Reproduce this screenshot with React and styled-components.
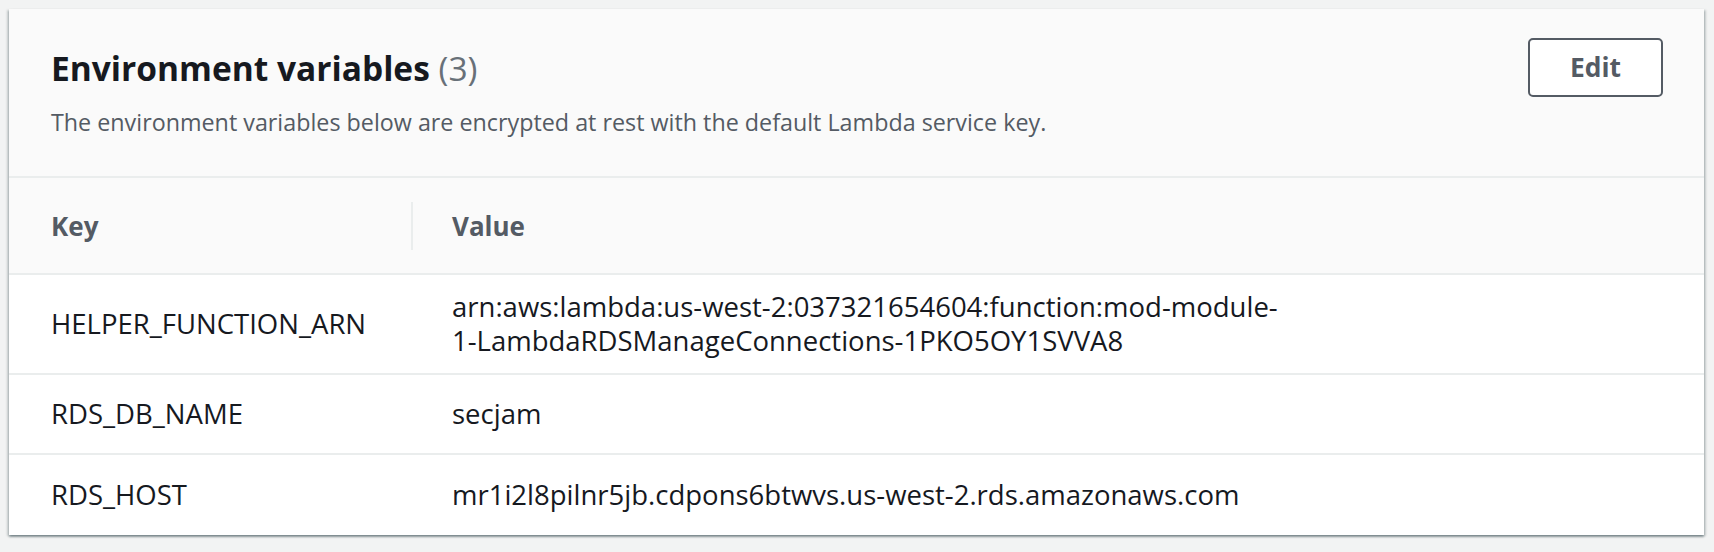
import React from "react";
import styled, { createGlobalStyle } from "styled-components";

const GlobalStyle = createGlobalStyle`
  html, body {
    margin: 0;
    padding: 0;
    background: #f2f3f3;
  }
  body {
    font-family: "Open Sans", "Noto Sans", sans-serif;
    color: #16191f;
    -webkit-font-smoothing: antialiased;
  }
`;

const Page = styled.div`
  padding: 9px 10px 9px 9px;
`;

const Card = styled.section`
  background: #ffffff;
  box-shadow: 0 2px 2px 0 rgba(0, 28, 36, 0.35),
    2px 1px 2px 0 rgba(0, 28, 36, 0.16),
    -2px 1px 2px 0 rgba(0, 28, 36, 0.16);
`;

const Header = styled.header`
  display: flex;
  align-items: flex-start;
  justify-content: space-between;
  padding: 29px 41px 36px 42px;
  background: #fafafa;
  border-bottom: 2px solid #eaeded;
`;

const HeaderText = styled.div`
  margin-top: 10px;
`;

const Title = styled.h2`
  margin: 0;
  font-size: 33.5px;
  line-height: 40px;
  font-weight: 700;
  color: #16191f;
`;

const Counter = styled.span`
  font-weight: 400;
  color: #687078;
`;

const Description = styled.p`
  margin: 16px 0 0;
  font-size: 23.3px;
  line-height: 36px;
  color: #545b64;
`;

const Button = styled.button`
  box-sizing: border-box;
  height: 59px;
  padding: 0 40px;
  border: 2px solid #545b64;
  border-radius: 5px;
  background: #ffffff;
  color: #545b64;
  font-family: inherit;
  font-size: 26.4px;
  font-weight: 700;
  line-height: 55px;
  cursor: pointer;
`;

const Row = styled.div`
  box-sizing: border-box;
  display: grid;
  grid-template-columns: 402px 1fr;
  min-height: ${(p) => (p.$head ? 97 : 80)}px;
  background: ${(p) => (p.$head ? "#fafafa" : "#ffffff")};
  border-bottom: 2px solid #eaeded;
  &:last-child {
    border-bottom: none;
  }
`;

const HeadCell = styled.div`
  position: relative;
  display: flex;
  align-items: center;
  padding: 0 ${(p) => (p.$first ? "42px" : "41px")};
  font-size: 26px;
  font-weight: 700;
  color: #545b64;
  ${(p) =>
    !p.$first &&
    `
    &::before {
      content: "";
      position: absolute;
      left: 0;
      top: 24px;
      width: 2px;
      height: 48px;
      background: #eaeded;
    }
  `}
`;

const Cell = styled.div`
  display: flex;
  align-items: center;
  padding: 15px ${(p) => (p.$first ? "42px" : "41px")};
  font-size: 27.5px;
  line-height: 34px;
  color: #16191f;
`;

const ValueText = styled.div`
  max-width: 845px;
  overflow-wrap: break-word;
`;

const variables = [
  {
    key: "HELPER_FUNCTION_ARN",
    value:
      "arn:aws:lambda:us-west-2:037321654604:function:mod-module-1-LambdaRDSManageConnections-1PKO5OY1SVVA8",
  },
  { key: "RDS_DB_NAME", value: "secjam" },
  {
    key: "RDS_HOST",
    value: "mr1i2l8pilnr5jb.cdpons6btwvs.us-west-2.rds.amazonaws.com",
  },
];

export default function App() {
  return (
    <>
      <GlobalStyle />
      <Page>
        <Card>
          <Header>
            <HeaderText>
              <Title>
                Environment variables <Counter>(3)</Counter>
              </Title>
              <Description>
                The environment variables below are encrypted at rest with the
                default Lambda service key.
              </Description>
            </HeaderText>
            <Button type="button">Edit</Button>
          </Header>
          <div role="table">
            <Row $head role="row">
              <HeadCell $first role="columnheader">
                Key
              </HeadCell>
              <HeadCell role="columnheader">Value</HeadCell>
            </Row>
            {variables.map((v) => (
              <Row key={v.key} role="row">
                <Cell $first role="cell">
                  {v.key}
                </Cell>
                <Cell role="cell">
                  <ValueText>{v.value}</ValueText>
                </Cell>
              </Row>
            ))}
          </div>
        </Card>
      </Page>
    </>
  );
}
